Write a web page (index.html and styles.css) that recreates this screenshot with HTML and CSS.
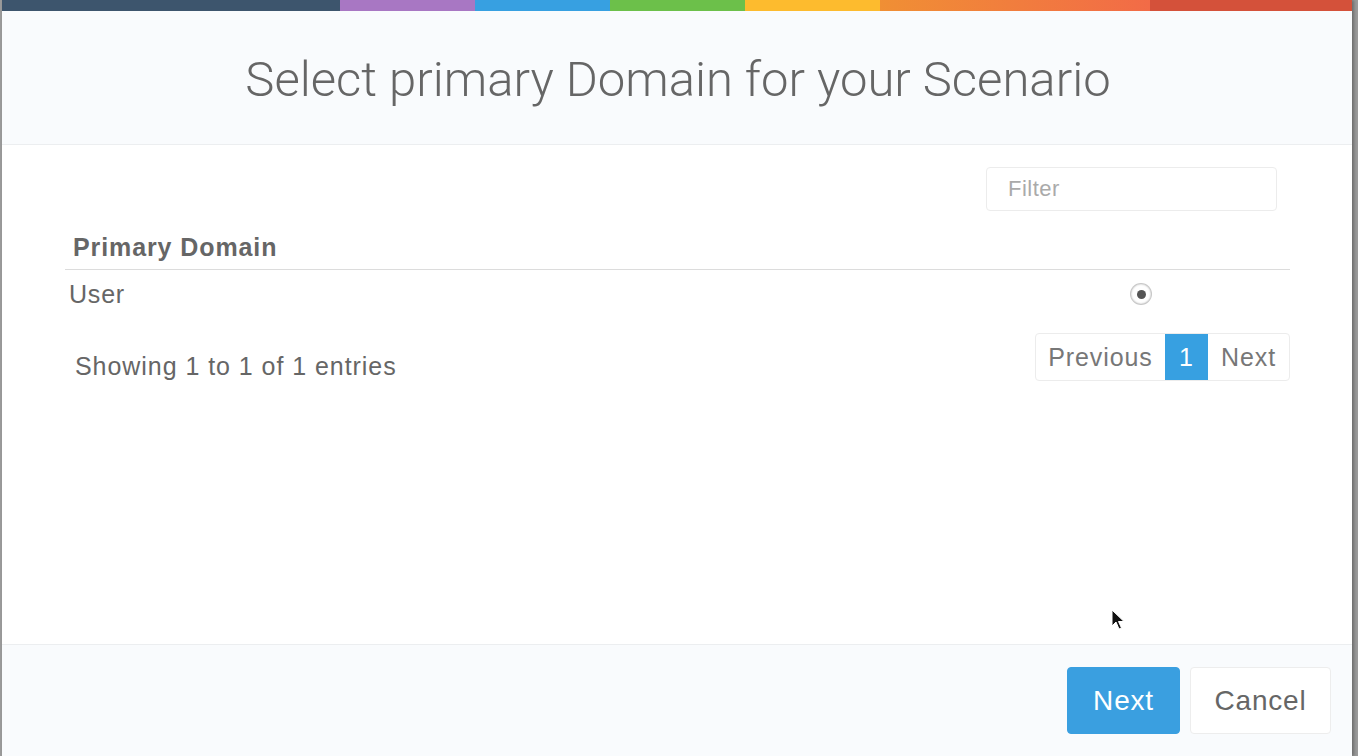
FILE: index.html
```html
<!DOCTYPE html>
<html>
<head>
<meta charset="utf-8">
<link rel="stylesheet" href="styles.css">
</head>
<body>
<div class="modal">
  <div class="stripe">
    <span class="s s1"></span><span class="s s2"></span><span class="s s3"></span><span class="s s4"></span><span class="s s5"></span><span class="s s6"></span><span class="s s7"></span>
  </div>
  <div class="header">
    <h1 class="title">Select primary Domain for your Scenario</h1>
  </div>
  <div class="body">
    <div class="filter-row">
      <div class="filter">Filter</div>
    </div>
    <div class="table">
      <div class="th">Primary Domain</div>
      <div class="tr">
        <span class="cell">User</span>
        <span class="radio"><span class="dot"></span></span>
      </div>
    </div>
    <div class="info-row">
      <span class="info">Showing 1 to 1 of 1 entries</span>
      <div class="pager">
        <span class="pg prev">Previous</span>
        <span class="pg active">1</span>
        <span class="pg next">Next</span>
      </div>
    </div>
    <svg class="cursor" width="14" height="22" viewBox="0 0 14 22"><path d="M1 1 L1 17 L5 13 L8 20 L10.5 19 L7.5 12.5 L13 12.5 Z" fill="#111" stroke="#fff" stroke-width="1"/></svg>
  </div>
  <div class="footer">
    <button class="btn primary">Next</button>
    <button class="btn cancel">Cancel</button>
  </div>
</div>
</body>
</html>
```

FILE: styles.css
```css
html, body {
  margin: 0;
  padding: 0;
  height: 756px;
  overflow: hidden;
}
body {
  background: #9a9a9a;
  font-family: "Liberation Sans", Arial, sans-serif;
  color: #666;
}
.modal {
  margin-left: 2px;
  width: 1350px;
  height: 756px;
  background: #fff;
  display: flex;
  flex-direction: column;
  box-shadow: 2px 0 3px rgba(0,0,0,0.3);
}
.stripe {
  display: flex;
  height: 11px;
  flex: none;
}
.s { display: block; height: 100%; }
.s1 { width: 338px; background: #3d556d; }
.s2 { width: 135px; background: #a877c3; }
.s3 { width: 135px; background: #37a0e1; }
.s4 { width: 135px; background: #6cc04a; }
.s5 { width: 135px; background: #fdbb2e; }
.s6 { width: 270px; background: linear-gradient(to right, #f08f34, #f26b47); }
.s7 { flex: 1; background: #d4513a; }
.header {
  height: 133px;
  flex: none;
  background: #f9fbfd;
  border-bottom: 1px solid #eceef0;
  display: flex;
  align-items: center;
  justify-content: center;
}
.title {
  margin: 0;
  font-family: Roboto, "Liberation Sans", sans-serif;
  font-weight: 300;
  font-size: 49px;
  color: #666;
  letter-spacing: 0;
  padding-top: 4px;
  padding-left: 2px;
}
.body {
  flex: 1;
  position: relative;
  padding: 22px 62px 0 63px;
}
.filter-row {
  display: flex;
  justify-content: flex-end;
  padding-right: 13px;
}
.filter {
  width: 268px;
  height: 42px;
  border: 1px solid #ececec;
  border-radius: 4px;
  padding-left: 21px;
  font-size: 22px;
  letter-spacing: 0.5px;
  line-height: 42px;
  color: #aaa;
}
.table { margin-top: 14px; }
.th {
  font-weight: bold;
  font-size: 25px;
  letter-spacing: 0.9px;
  padding: 8px 8px 7px;
  border-bottom: 1px solid #dcdcdc;
  color: #666;
}
.tr {
  display: flex;
  justify-content: space-between;
  align-items: center;
  height: 48px;
  padding-left: 4px;
  padding-right: 139px;
}
.cell { font-size: 25px; letter-spacing: 0.8px; padding-top: 1px; }
.radio {
  width: 20px;
  height: 20px;
  border-radius: 50%;
  background: #fff;
  box-shadow: 0 0 0 1px #c8c8c8, inset 0 0 2px #bbb;
  display: flex;
  align-items: center;
  justify-content: center;
}
.dot {
  width: 9px;
  height: 9px;
  border-radius: 50%;
  background: #555;
}
.info-row {
  display: flex;
  justify-content: space-between;
  align-items: center;
  margin-top: 15px;
}
.info {
  font-size: 25px;
  letter-spacing: 0.95px;
  padding-left: 10px;
  padding-top: 19px;
}
.pager {
  display: flex;
  border: 1px solid #ececec;
  border-radius: 4px;
  height: 46px;
  overflow: hidden;
}
.pg {
  font-size: 25px;
  letter-spacing: 0.9px;
  line-height: 46px;
  color: #777;
  text-align: center;
}
.pg.prev { width: 129px; }
.pg.active {
  width: 43px;
  background: #37a0e1;
  color: #fff;
}
.pg.next { width: 81px; }
.cursor {
  position: absolute;
  left: 1109px;
  top: 464px;
}
.footer {
  flex: none;
  height: 112px;
  background: #f9fbfd;
  border-top: 1px solid #eceef0;
  display: flex;
  justify-content: flex-end;
  align-items: flex-start;
  gap: 10px;
  padding: 22px 21px 0 0;
  box-sizing: border-box;
}
.btn {
  font-family: "Liberation Sans", Arial, sans-serif;
  font-size: 28px;
  letter-spacing: 0.8px;
  height: 67px;
  border-radius: 4px;
  border: 1px solid #ededed;
  background: #fff;
  color: #666;
  padding: 0;
}
.btn.primary {
  background: #3a9fe0;
  border-color: #3a9fe0;
  color: #fff;
  width: 113px;
}
.btn.cancel { width: 141px; }
```
